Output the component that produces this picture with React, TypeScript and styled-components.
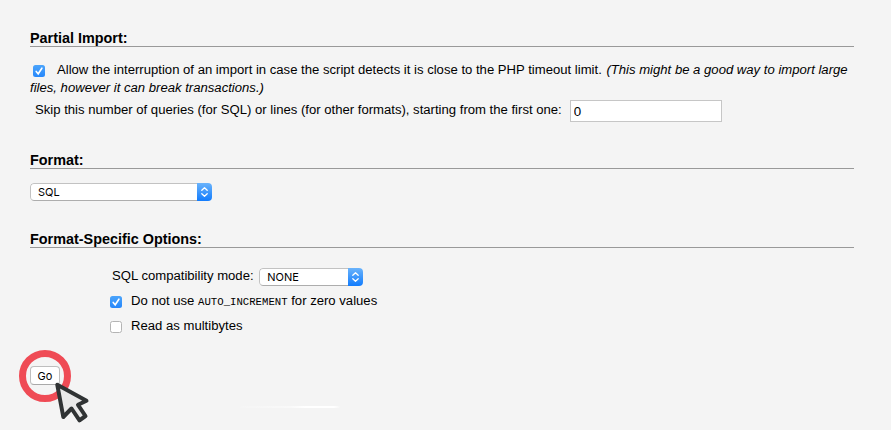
import React from "react";
import styled, { createGlobalStyle } from "styled-components";

const Global = createGlobalStyle`
  * { box-sizing: border-box; }
  body {
    margin: 0;
    background: #f4f4f4;
    color: #000;
    font-family: "Liberation Sans", Arial, sans-serif;
    font-size: 13.12px;
    line-height: 18px;
    overflow: hidden;
  }
`;

const Page = styled.main`
  width: 891px;
  height: 430px;
  padding: 29px 37px 0 30px;
  position: relative;
  overflow: hidden;
`;

const Section = styled.section<{ $height: number }>`
  height: ${(p) => p.$height}px;
`;

const Heading = styled.h3`
  margin: 0;
  height: 18px;
  border-bottom: 1px solid #999;
  font-size: 14.4px;
  line-height: 18px;
  font-weight: bold;
  white-space: nowrap;
`;

const Line = styled.div<{ $top?: number; $left?: number; $height?: number }>`
  display: flex;
  align-items: flex-start;
  margin-top: ${(p) => p.$top ?? 0}px;
  padding-left: ${(p) => p.$left ?? 0}px;
  height: ${(p) => p.$height ?? 18}px;
  white-space: pre;
`;

const Label = styled.span<{ $italic?: boolean; $gap?: number }>`
  margin-right: ${(p) => p.$gap ?? 0}px;
  font-style: ${(p) => (p.$italic ? "italic" : "normal")};
`;

const ModeLabel = styled(Label)`
  margin-top: -1px;
`;

const Code = styled.code`
  font-family: "Liberation Mono", "Courier New", monospace;
  font-size: 10.66px;
  line-height: 1;
`;

const Box = styled.span<{ $checked?: boolean; $gap: number }>`
  display: flex;
  flex: none;
  width: 12px;
  height: 12px;
  margin: 4px ${(p) => p.$gap}px 0 0;
  border-radius: 2.5px;
  border: ${(p) => (p.$checked ? "0" : "1px solid #b4b4b4")};
  background: ${(p) => (p.$checked ? "linear-gradient(#4ba4fb, #2687fb)" : "#fff")};
`;

const TextField = styled.input`
  width: 152px;
  height: 22px;
  margin: -1px 0 0 8px;
  padding: 1px 3px 0;
  border: 1px solid #c6c6c6;
  border-radius: 0;
  background: #fff;
  color: #000;
  font: 13.33px "Liberation Sans", Arial, sans-serif;
  outline: none;
`;

const SelectBox = styled.div<{ $width: number }>`
  display: flex;
  width: ${(p) => p.$width}px;
  height: 18px;
  border-radius: 4px;
  overflow: hidden;
  background: #fff;
  font-family: Inter, "Liberation Sans", sans-serif;
  font-size: 11px;
  line-height: 17px;
`;

const SelectValue = styled.span`
  flex: 1;
  padding-left: 7px;
  border: 1px solid #c2c2c2;
  border-bottom-color: #adadad;
  border-right: 0;
  border-radius: 4px 0 0 4px;
`;

const SelectArrow = styled.span`
  display: flex;
  width: 15px;
  background: linear-gradient(#6ab3fb, #127cfd);
`;

const GoButton = styled.button`
  display: block;
  width: 30px;
  height: 19px;
  padding: 0;
  border: 1px solid #bebebe;
  border-bottom-color: #a9a9a9;
  border-radius: 4px;
  background: #fff;
  color: #000;
  font: 11px/16px Inter, "Liberation Sans", sans-serif;
`;

const Pointer = styled.svg`
  position: absolute;
  left: 10px;
  top: 340px;
`;

const Streak = styled.div`
  position: absolute;
  left: 240px;
  top: 406px;
  width: 100px;
  height: 2px;
  border-radius: 50% 4px 4px 50%;
  background: linear-gradient(90deg, #f5f5f5, #f9f9f9 50%, #fff 65%, #fff 94%, #f5f5f5);
`;

function Checkbox({ checked, gap }: { checked?: boolean; gap: number }) {
  return (
    <Box $checked={checked} $gap={gap}>
      {checked && (
        <svg width="12" height="12" viewBox="0 0 12 12" fill="none" stroke="#fff" strokeWidth="1.6" strokeLinecap="round">
          <path d="M3.2 6.4 5.2 8.8 8.9 3.2" />
        </svg>
      )}
    </Box>
  );
}

function Select({ value, width }: { value: string; width: number }) {
  return (
    <SelectBox $width={width}>
      <SelectValue>{value}</SelectValue>
      <SelectArrow>
        <svg width="15" height="18" viewBox="0 0 15 18" fill="none" stroke="#fff" strokeWidth="1.3" strokeLinecap="round" strokeLinejoin="round">
          <path d="M4.8 7.2 7.5 4.8 10.2 7.2M4.8 10.8 7.5 13.2 10.2 10.8" />
        </svg>
      </SelectArrow>
    </SelectBox>
  );
}

export default function App() {
  return (
    <>
      <Global />
      <Page>
        <Section $height={122}>
          <Heading>Partial Import:</Heading>
          <Line $top={14} $left={3}>
            <Checkbox checked gap={12} />
            <Label $gap={1}>Allow the interruption of an import in case the script detects it is close to the PHP timeout limit. </Label>
            <Label $italic>(This might be a good way to import large</Label>
          </Line>
          <Line>
            <Label $italic>files, however it can break transactions.)</Label>
          </Line>
          <Line $top={4} $left={5} $height={22}>
            <Label>Skip this number of queries (for SQL) or lines (for other formats), starting from the first one:</Label>
            <TextField defaultValue="0" aria-label="Number of queries to skip" />
          </Line>
        </Section>
        <Section $height={79}>
          <Heading>Format:</Heading>
          <Line $top={14}>
            <Select value="SQL" width={182} />
          </Line>
        </Section>
        <Section $height={136}>
          <Heading>Format-Specific Options:</Heading>
          <Line $top={20} $left={82}>
            <ModeLabel $gap={2}>SQL compatibility mode: </ModeLabel>
            <Select value="NONE" width={104} />
          </Line>
          <Line $top={6} $left={80}>
            <Checkbox checked gap={9} />
            <Label>Do not use <Code>AUTO_INCREMENT</Code> for zero values</Label>
          </Line>
          <Line $top={7} $left={80}>
            <Checkbox gap={9} />
            <Label>Read as multibytes</Label>
          </Line>
        </Section>
        <GoButton>Go</GoButton>
        <Pointer width="90" height="90" viewBox="0 0 90 90" fill="none">
          <circle cx="35" cy="36" r="22.5" stroke="#ef4b55" strokeWidth="7" />
          <path d="M47.3 44.8 53.3 77 61.5 68.5 69.5 80.3 75.5 76 68 64.8 76.5 60.8Z" fill="#e9e9e9" stroke="#303334" strokeWidth="4" strokeLinejoin="round" />
        </Pointer>
        <Streak />
      </Page>
    </>
  );
}
